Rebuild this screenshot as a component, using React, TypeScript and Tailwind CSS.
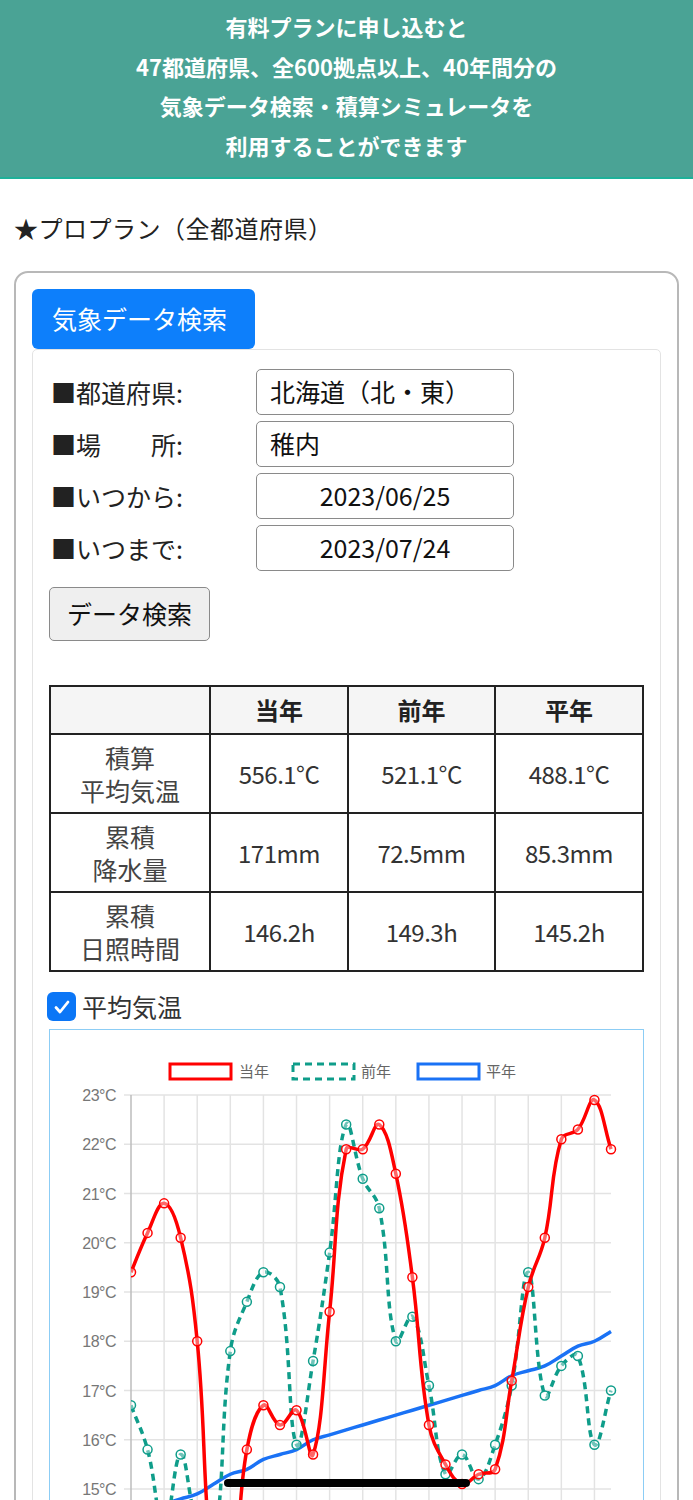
import React from 'react';

// 当年・前年・平年 の日別平均気温 (06/25〜07/24)
const current = [19.4, 20.2, 20.8, 20.1, 18.0, 13.3, 13.1, 15.8, 16.7, 16.3, 16.6, 15.7, 18.6, 21.9, 21.9, 22.4, 21.4, 19.3, 16.3, 15.5, 15.1, 15.3, 15.4, 17.2, 19.1, 20.1, 22.1, 22.3, 22.9, 21.9];
const lastYear = [16.7, 15.8, 14.2, 15.7, 14.3, 13.9, 17.8, 18.8, 19.4, 19.1, 15.9, 17.6, 19.8, 22.4, 21.3, 20.7, 18.0, 18.5, 17.1, 15.3, 15.7, 15.2, 15.9, 17.1, 19.4, 16.9, 17.5, 17.7, 15.9, 17.0];
const normal = [14.5, 14.6, 14.7, 14.8, 14.9, 15.1, 15.3, 15.4, 15.6, 15.7, 15.8, 16.0, 16.1, 16.2, 16.3, 16.4, 16.5, 16.6, 16.7, 16.8, 16.9, 17.0, 17.1, 17.3, 17.4, 17.5, 17.7, 17.9, 18.0, 18.2];

const X0 = 81;
const STEP = 480 / 29;
const Y0 = 65;
const PER = 49.25;
const px = (i: number) => X0 + i * STEP;
const py = (v: number) => Y0 + (23 - v) * PER;

type Pt = { x: number; y: number };

// Chart.js の splineCurve と同じ考え方で制御点を作る
const splinePath = (values: number[], t = 0.4): string => {
  const pts: Pt[] = values.map((v, i) => ({ x: px(i), y: py(v) }));
  const cps = pts.map((p, i) => {
    const prev = pts[i - 1] ?? p;
    const next = pts[i + 1] ?? p;
    const d01 = Math.hypot(p.x - prev.x, p.y - prev.y);
    const d12 = Math.hypot(next.x - p.x, next.y - p.y);
    const sum = d01 + d12 || 1;
    const fa = t * (d01 / sum);
    const fb = t * (d12 / sum);
    return {
      px: p.x - fa * (next.x - prev.x),
      py: p.y - fa * (next.y - prev.y),
      nx: p.x + fb * (next.x - prev.x),
      ny: p.y + fb * (next.y - prev.y),
    };
  });
  let d = `M${pts[0].x},${pts[0].y}`;
  for (let i = 1; i < pts.length; i++) {
    d += ` C${cps[i - 1].nx},${cps[i - 1].ny} ${cps[i].px},${cps[i].py} ${pts[i].x},${pts[i].y}`;
  }
  return d;
};

const RED = '#ff0000';
const TEAL = '#0f9d8a';
const BLUE = '#1a72f5';

const TempChart: React.FC = () => {
  const ticks = [23, 22, 21, 20, 19, 18, 17, 16, 15, 14, 13, 12];
  const bottom = py(12);
  return (
    <svg width="591" height="600" viewBox="0 0 591 600" className="block">
      <defs>
        <clipPath id="plot">
          <rect x={X0} y={Y0 - 10} width={500} height={bottom - Y0 + 10} />
        </clipPath>
      </defs>

      {/* 凡例 */}
      <g fontFamily="'Noto Sans CJK JP', sans-serif" fontSize="15" fill="#666">
        <rect x="120" y="34" width="61" height="15" fill="none" stroke={RED} strokeWidth="3" />
        <text x="189" y="47">当年</text>
        <rect x="243" y="34" width="61" height="15" fill="none" stroke={TEAL} strokeWidth="3" strokeDasharray="7 5" />
        <text x="311" y="47">前年</text>
        <rect x="368" y="34" width="61" height="15" fill="none" stroke={BLUE} strokeWidth="3" />
        <text x="436" y="47">平年</text>
      </g>

      {/* グリッド */}
      {ticks.map((v) => (
        <g key={v}>
          <line x1={X0 - 7} x2={px(29)} y1={py(v)} y2={py(v)} stroke="#e3e3e3" strokeWidth="1.5" />
          {v >= 15 && (
            <text
              x="66"
              y={py(v) + 6}
              textAnchor="end"
              fontFamily="'Liberation Sans', Arial, sans-serif"
              fontSize="16"
              fill="#777"
              letterSpacing="-0.5"
            >
              {v}°C
            </text>
          )}
        </g>
      ))}
      {Array.from({ length: 15 }, (_, k) => (
        <line
          key={k}
          x1={px(k * 2)}
          x2={px(k * 2)}
          y1={Y0}
          y2={bottom + 7}
          stroke={k === 0 ? '#bdbdbd' : '#e3e3e3'}
          strokeWidth="1.5"
        />
      ))}

      {/* データ線 */}
      <g clipPath="url(#plot)" fill="none">
        <path d={splinePath(normal)} stroke={BLUE} strokeWidth="3.5" />
        <path d={splinePath(lastYear)} stroke={TEAL} strokeWidth="3.5" strokeDasharray="7 5" />
        {lastYear.map((v, i) => (
          <circle key={`l${i}`} cx={px(i)} cy={py(v)} r="4.5" stroke={TEAL} strokeWidth="1.5" fill="rgba(255,255,255,0.4)" />
        ))}
        <path d={splinePath(current)} stroke={RED} strokeWidth="3.5" />
        {current.map((v, i) => (
          <circle key={`c${i}`} cx={px(i)} cy={py(v)} r="4.5" stroke={RED} strokeWidth="1.5" fill="rgba(255,255,255,0.4)" />
        ))}
      </g>
    </svg>
  );
};

const rows = [
  { label: ['積算', '平均気温'], vals: ['556.1°C', '521.1°C', '488.1°C'] },
  { label: ['累積', '降水量'], vals: ['171mm', '72.5mm', '85.3mm'] },
  { label: ['累積', '日照時間'], vals: ['146.2h', '149.3h', '145.2h'] },
];

const fields = [
  { label: '■都道府県:', value: '北海道（北・東）', center: false },
  { label: '■場　　所:', value: '稚内', center: false },
  { label: '■いつから:', value: '2023/06/25', center: true },
  { label: '■いつまで:', value: '2023/07/24', center: true },
];

export default function App() {
  return (
    <div className="relative w-[693px] min-h-[1500px] overflow-hidden bg-white font-['Noto_Sans_CJK_JP',sans-serif] text-[#222]">
      {/* 案内バナー */}
      <div className="bg-[#4aa395] border-b-2 border-[#1eb199] pt-[7px] pb-[12px] text-center text-white font-bold text-[22px] leading-[39.5px]">
        <p>有料プランに申し込むと</p>
        <p>47都道府県、全600拠点以上、40年間分の</p>
        <p>気象データ検索・積算シミュレータを</p>
        <p>利用することができます</p>
      </div>

      <h2 className="mt-[32px] ml-[14px] text-[24px] leading-[34px] tracking-[0.5px]">★プロプラン（全都道府県）</h2>

      <div className="mt-[26px] mx-[14px] border-2 border-[#b8b8b8] rounded-[14px] p-4 pb-0">
        <div className="w-[223px] h-[60px] bg-[#0d7ffb] rounded-[6px] flex items-center pl-[20px] text-white text-[25px]">
          気象データ検索
        </div>

        <div className="border border-[#e3e3e3] rounded-[5px] px-4 pt-[19px] pb-10">
          <div className="flex flex-col gap-[6px]">
            {fields.map((f) => (
              <div key={f.label} className="flex items-center">
                <span className="w-[207px] pl-[2px] text-[25px] leading-none">{f.label}</span>
                <div
                  className={`w-[258px] h-[46px] border-[1.5px] border-[#8a8a8a] rounded-[5px] flex items-center text-[25px] text-[#111] ${
                    f.center ? 'justify-center' : 'pl-[13px]'
                  }`}
                >
                  {f.value}
                </div>
              </div>
            ))}
          </div>

          <button className="mt-[16px] w-[161px] h-[54px] bg-[#efefef] border-[1.5px] border-[#8a8a8a] rounded-[5px] text-[25px] text-[#111]">
            データ検索
          </button>

          <table className="mt-[44px] w-full border-collapse border-2 border-[#222] text-center">
            <thead>
              <tr className="h-[48px] bg-[#f5f5f5]">
                <th className="w-[160px] border-2 border-[#222]"></th>
                <th className="w-[138px] border-2 border-[#222] text-[24px] font-bold">当年</th>
                <th className="w-[147px] border-2 border-[#222] text-[24px] font-bold">前年</th>
                <th className="border-2 border-[#222] text-[24px] font-bold">平年</th>
              </tr>
            </thead>
            <tbody>
              {rows.map((r) => (
                <tr key={r.label.join()} className="h-[79px]">
                  <td className="border-2 border-[#222] text-[25px] leading-[33px] text-[#444]">
                    <div>{r.label[0]}</div>
                    <div>{r.label[1]}</div>
                  </td>
                  {r.vals.map((v) => (
                    <td key={v} className="border-2 border-[#222] text-[24px] text-[#333] tracking-[-0.5px]">
                      {v}
                    </td>
                  ))}
                </tr>
              ))}
            </tbody>
          </table>

          <div className="mt-[20px] flex items-center gap-[6px]">
            <span className="w-[29px] h-[29px] -ml-[2px] rounded-[6px] bg-[#0b76f6] flex items-center justify-center">
              <svg width="20" height="20" viewBox="0 0 20 20" fill="none">
                <path d="M4 10.5l4 4.5 8-10" stroke="white" strokeWidth="2.8" strokeLinecap="round" strokeLinejoin="round" />
              </svg>
            </span>
            <span className="text-[25px] leading-none text-[#333]">平均気温</span>
          </div>

          <div className="mt-[8px] border-[1.5px] border-[#8ccdf5]">
            <TempChart />
          </div>
        </div>
      </div>

      {/* ホームインジケータ */}
      <div className="absolute left-[224px] top-[1479px] w-[246px] h-[8px] rounded-full bg-black"></div>
    </div>
  );
}
